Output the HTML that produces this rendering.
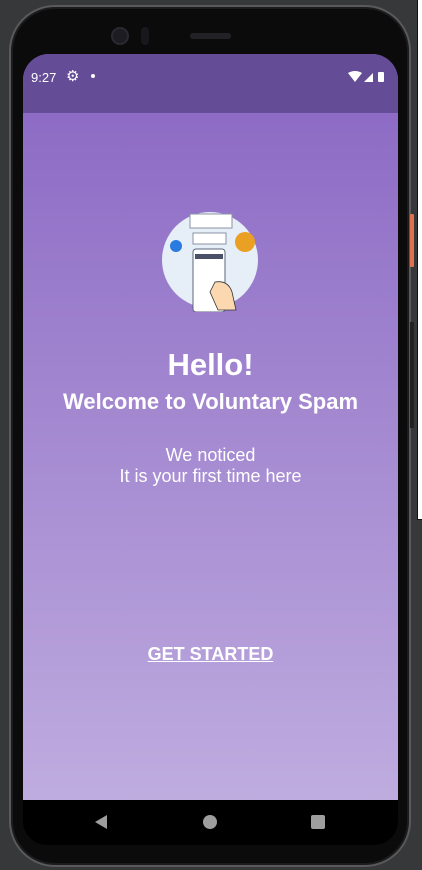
<!DOCTYPE html>
<html><head><style>
*{margin:0;padding:0;box-sizing:border-box}
body{width:422px;height:870px;background:#37383a;position:relative;overflow:hidden;font-family:"Liberation Sans",sans-serif}
.strip{position:absolute;left:417px;top:0;width:5px;height:520px;background:#fff;border-left:1px solid #111;border-bottom:1px solid #111}
.phone{position:absolute;left:9px;top:5px;width:402px;height:862px;border-radius:46px;background:#0b0b0c;border:2px solid #5a5a5c;box-shadow:inset 0 0 0 2px #1c1c1e}
.btn{position:absolute;left:410px;top:214px;width:4px;height:53px;background:#e0704e;border-radius:1px}
.btn2{position:absolute;left:410px;top:322px;width:4px;height:106px;background:#222;}
.screen{position:absolute;left:23px;top:54px;width:375px;height:746px;border-radius:26px 26px 0 0;overflow:hidden;background:linear-gradient(#8966c3,#bfacdf)}
.status{height:59px;background:#654c96;color:#fff;font-size:13px;position:relative}
.nav{position:absolute;left:23px;top:800px;width:375px;height:45px;background:#000;border-radius:0 0 24px 24px}
.t{position:absolute;width:375px;text-align:center;color:#fff;left:0}
</style></head><body>
<div class="strip"></div>
<div class="phone"></div>
<div class="btn"></div><div class="btn2"></div>
<div style="position:absolute;left:111px;top:27px;width:18px;height:18px;border-radius:50%;background:#1c1c22;border:2px solid #2a2a30"></div>
<div style="position:absolute;left:141px;top:27px;width:8px;height:18px;border-radius:4px;background:#18181c"></div>
<div style="position:absolute;left:190px;top:33px;width:41px;height:6px;border-radius:3px;background:#222226"></div>
<div class="screen">
 <div class="status">
  <span style="position:absolute;left:8px;top:16px">9:27</span>
  <span style="position:absolute;left:43px;top:13px;font-size:15px">⚙</span>
  <span style="position:absolute;left:68px;top:20px;width:4px;height:4px;border-radius:50%;background:#fff"></span>
  <svg style="position:absolute;left:325px;top:17px" width="44" height="12"><path d="M0 2 Q7 -2 14 2 L7 11Z" fill="#fff"/><path d="M16 11 L25 2 L25 11Z" fill="#fff"/><rect x="30" y="1" width="6" height="10" rx="1" fill="#fff"/></svg>
 </div>
 <svg style="position:absolute;left:137px;top:158px" width="100" height="100">
  <circle cx="50" cy="48" r="48" fill="#e6eef7"/>
  <rect x="30" y="2" width="42" height="14" fill="#fff" stroke="#8a93a6"/>
  <rect x="33" y="21" width="33" height="11" fill="#fff" stroke="#8a93a6"/>
  <rect x="33" y="37" width="32" height="63" rx="3" fill="#fff" stroke="#5c6578"/>
  <rect x="35" y="42" width="28" height="5" fill="#4a5166"/>
  <path d="M55 70 Q68 68 72 80 L76 98 L58 98 L50 80Z" fill="#fbd8b0" stroke="#333" stroke-width=".8"/>
  <circle cx="16" cy="34" r="6" fill="#2a7be0"/>
  <circle cx="85" cy="30" r="10" fill="#eaa022"/>
 </svg>
 <div class="t" style="top:293px;font-size:31px;font-weight:bold">Hello!</div>
 <div class="t" style="top:335px;font-size:22px;font-weight:bold">Welcome to Voluntary Spam</div>
 <div class="t" style="top:391px;font-size:18px;line-height:21px">We noticed<br>It is your first time here</div>
 <div class="t" style="top:590px;font-size:18px;font-weight:bold;text-decoration:underline">GET STARTED</div>
</div>
<div class="nav">
 <svg width="375" height="45"><path d="M72 22 L84 15 L84 29Z" fill="#9e9e9e"/><circle cx="187" cy="22" r="7" fill="#9e9e9e"/><rect x="288" y="15" width="14" height="14" rx="2" fill="#9e9e9e"/></svg>
</div>
</body></html>
